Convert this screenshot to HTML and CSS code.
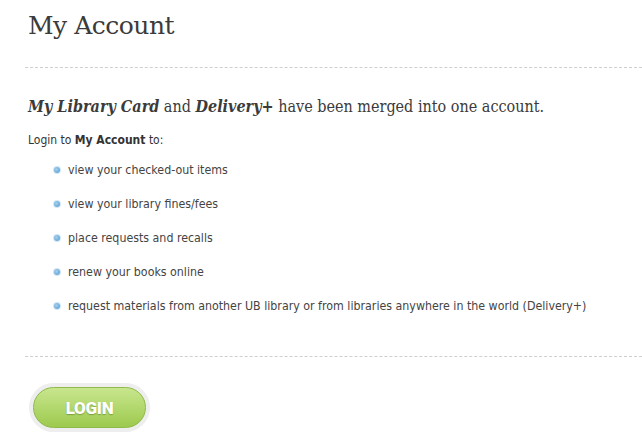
FILE: index.html
```html
<!DOCTYPE html>
<html>
<head>
<meta charset="utf-8">
<link rel="stylesheet" href="styles.css">
</head>
<body>
<div class="page">
  <h1 class="title">My Account</h1>
  <hr class="rule">
  <p class="lead"><b><i>My Library Card</i></b> and <b><i>Delivery+</i></b> have been merged into one account.</p>
  <p class="intro">Login to <b>My Account</b> to:</p>
  <ul class="list">
    <li>view your checked-out items</li>
    <li>view your library fines/fees</li>
    <li>place requests and recalls</li>
    <li>renew your books online</li>
    <li>request materials from another UB library or from libraries anywhere in the world (Delivery+)</li>
  </ul>
  <hr class="rule rule2">
  <div class="btn-wrap"><a class="btn">LOGIN</a></div>
</div>
</body>
</html>
```
FILE: styles.css
```css
html, body { margin: 0; padding: 0; background: #fff; }
.page { padding: 0 0 0 28px; }
.title {
  font-family: "DejaVu Serif", Georgia, serif;
  font-weight: normal;
  font-size: 25px;
  color: #3b3b3b;
  margin: 0;
  padding-top: 9px;
  line-height: 34px;
  letter-spacing: -0.5px;
}
.rule {
  border: 0;
  border-top: 1px dashed #cfcfcf;
  margin: 24px 0 0 -3px;
  height: 0;
}
.lead {
  font-family: "DejaVu Serif Condensed", "DejaVu Serif", Georgia, serif;
  font-size: 16px;
  color: #3b3b3b;
  margin: 29px 0 0 0;
  line-height: 20px;
}
.intro {
  font-family: "DejaVu Sans Condensed", Tahoma, sans-serif;
  font-size: 12px;
  color: #333;
  margin: 15px 0 0 0;
  line-height: 16px;
}
.list {
  list-style: none;
  margin: 0;
  padding: 0 0 0 40px;
  font-family: "DejaVu Sans Condensed", Tahoma, sans-serif;
  font-size: 12.3px;
  color: #444;
}
.list li {
  display: flex;
  align-items: center;
  height: 34px;
  line-height: 16px;
}
.list li:first-child { margin-top: 5px; }
.list li::before {
  content: "";
  width: 6px;
  height: 6px;
  border-radius: 50%;
  background: radial-gradient(circle at 40% 40%, #a7d1ee, #4a95cf);
  box-shadow: 0 0 0 1px #d3e7f6;
  margin: 0 8px 0 -14px;
  flex: none;
}
.rule2 { margin-top: 33px; }
.btn-wrap {
  display: inline-flex;
  margin: 26px 0 0 1px;
  padding: 4px;
  border-radius: 30px;
  background: #eeeeee;
}
.btn {
  display: flex;
  align-items: center;
  justify-content: center;
  width: 113px;
  height: 41px;
  border-radius: 21px;
  background: linear-gradient(#c8e68e, #9dca4e);
  border: 1px solid #8fb94a;
  box-sizing: border-box;
  color: #fff;
  font-family: Roboto, sans-serif;
  font-weight: 900;
  font-size: 17px;
  letter-spacing: -0.3px;
  text-shadow: 0 1px 1px rgba(80,110,30,0.5);
}
```
